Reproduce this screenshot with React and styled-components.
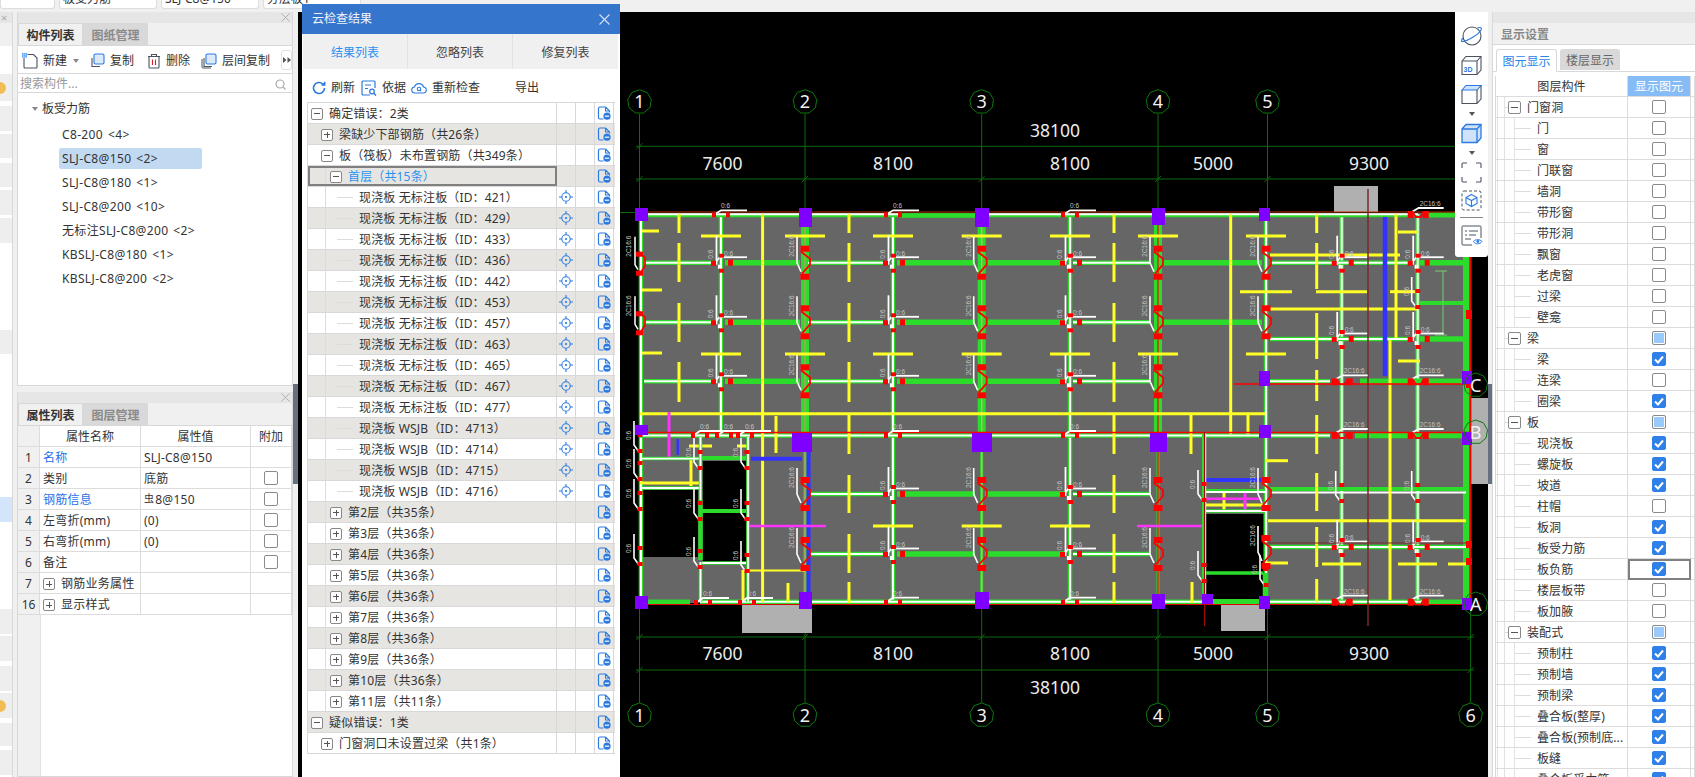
import React from 'react';
import styled, { createGlobalStyle } from 'styled-components';

const GlobalStyle = createGlobalStyle`
  html, body { margin: 0; height: 100%; overflow: hidden; background: #f0f0f0; }
  #root { height: 777px; }
  * { box-sizing: border-box; }
`;

const FONT = `"Noto Sans", "Noto Sans CJK SC", sans-serif`;
const LINE = '#d8d8d8';

const Page = styled.div`
  position: relative; width: 1695px; height: 777px; overflow: hidden;
  font: 12px/16px ${FONT}; color: #333; background: #f0f0f0;
  display: flex; flex-direction: column;
`;
const TopStrip = styled.div`height: 12px; display: flex; gap: 4px; align-items: flex-start;`;
const TopCell = styled.div`
  width: ${p => p.$w}px; height: 9px; background: #fff; border: 1px solid #ddd; border-top: 0;
  border-radius: 0 0 3px 3px; overflow: hidden; padding-left: 3px;
  span { display: block; margin-top: -9px; white-space: nowrap; }
`;
const Main = styled.div`flex: 1; display: flex; min-height: 0;`;

/* left sliver */
const Sliver = styled.div`width: 13px; border-right: 1px solid ${LINE}; background: #fff; display: flex; flex-direction: column; overflow: hidden;`;
const SliverHead = styled.div`height: 11px; background: #e6e6e6; color: #aaa; font-size: 11px; line-height: 11px; padding-left: 1px;`;
const SliverTabs = styled.div`height: 23px; background: #f0f0f0;`;
const Band = styled.div`
  flex: none; height: ${p => p.$h}px; margin-top: ${p => p.$mt}px; background: ${p => p.$c || '#eeeeee'};
  display: flex; align-items: center;
`;
const Dot = styled.i`width: 12px; height: 12px; border-radius: 50%; background: #f2bd55; margin-left: -6px;`;

const Gap = styled.div`width: ${p => p.$w}px; flex: none;`;
const Column = styled.div`width: 276px; flex: none; display: flex; flex-direction: column; gap: 6px;`;
const Panel = styled.div`
  height: ${p => p.$h}px; flex: ${p => p.$h ? 'none' : 1}; min-height: 0; display: flex; flex-direction: column;
  background: #fff; border: 1px solid ${LINE}; border-width: 0 1px 1px 1px; overflow: hidden;
`;
const PanelBar = styled.div`
  height: 11px; flex: none; background: #e6e6e6; color: #a8a8a8; font-size: 12px; line-height: 11px;
  text-align: right; padding-right: 2px;
`;
const TabRow = styled.div`height: 23px; flex: none; background: #f0f0f0; display: flex; border-bottom: 1px solid ${LINE};`;
const Tab = styled.div`
  width: 65px; text-align: center; line-height: 24px; font-weight: 700;
  color: ${p => p.$on ? '#333' : '#8a8a8a'}; background: ${p => p.$on ? '#f0f0f0' : '#d9d9d9'};
  border: 1px solid ${LINE}; border-bottom: 0;
`;
const ToolRow = styled.div`height: 28px; flex: none; display: flex; align-items: center; padding: 3px 0 0 4px; background: #fff; border-bottom: 1px solid ${LINE};`;
const ToolItem = styled.div`width: ${p => p.$w}px; flex: none; display: flex; align-items: center; gap: 5px; white-space: nowrap;`;
const Caret = styled.i`
  width: 0; height: 0; border: 3px solid transparent; border-top: 4px solid #888; border-bottom: 0; margin-left: ${p => p.$ml || 0}px; flex: none;
`;
const MoreButton = styled.div`
  width: 12px; height: 20px; margin-top: -3px; background: #fff; border: 1px solid #e2e2e2; border-radius: 3px; display: flex; align-items: center; justify-content: center;
`;
const SearchRow = styled.div`height: 19px; flex: none; display: flex; align-items: center; justify-content: space-between; padding: 2px 6px 0 2px; color: #999; border-bottom: 1px solid ${LINE}; background: #fff;`;
const Tree = styled.div`flex: 1; background: #fff; padding: 4px 0 0 13px;`;
const TreeRoot = styled.div`height: 24px; display: flex; align-items: center; gap: 4px; padding-left: 1px;`;
const TreeLeaf = styled.div`
  width: 143px; height: 21px; margin: 3px 0 0 28px; padding-left: 3px; line-height: 21px; border-radius: 2px; white-space: nowrap; letter-spacing: .35px; word-spacing: 1.5px;
  background: ${p => p.$on ? '#c2d9f2' : 'transparent'};
`;

/* property table */
const PropBody = styled.div`flex: 1; background: linear-gradient(to right, #f0f0f0 22px, #e2e2e2 22px, #e2e2e2 23px, #fff 23px);`;
const PropGrid = styled.div`display: grid; grid-template-columns: 22px 101px 110px 41px; grid-auto-rows: 21px;`;
const PropCell = styled.div`
  border-right: 1px solid #dcdcdc; border-bottom: 1px solid #dcdcdc; display: flex; align-items: center; white-space: nowrap; overflow: hidden;
  padding-left: ${p => p.$num || p.$center ? 0 : 3}px; padding-top: ${p => p.$box ? 0 : 2}px; justify-content: ${p => p.$num || p.$center ? 'center' : 'flex-start'};
  background: ${p => p.$num ? '#f0f0f0' : '#fff'};
  color: ${p => p.$link ? '#2a6fe8' : '#333'}; letter-spacing: ${p => p.$num || p.$center ? 0 : '.25px'};
`;
const Rebar = styled.span`font-size: 10px; position: relative; top: -2px; margin-right: 1px;`;

const Box = styled.i`
  position: relative; width: ${p => p.$s || 12}px; height: ${p => p.$s || 12}px; flex: none; border: 1px solid #888; border-radius: 2px; background: #fff; margin-right: 6px;
  &::before { content: ''; position: absolute; left: 2px; right: 2px; top: 50%; height: 1px; margin-top: -.5px; background: #555; }
  &::after { content: ''; display: ${p => p.$plus ? 'block' : 'none'}; position: absolute; top: 2px; bottom: 2px; left: 50%; width: 1px; margin-left: -.5px; background: #555; }
`;
const Check = styled.span`
  width: 14px; height: 14px; flex: none; border-radius: 2px; display: flex; align-items: center; justify-content: center;
  border: 1px solid ${p => p.$state === 'on' ? '#2f80e8' : '#8a8a8a'};
  background: ${p => p.$state === 'on' ? '#2f80e8' : '#fff'};
  ${p => p.$state === 'partial' ? 'box-shadow: inset 0 0 0 1px #fff; background: #99c9ff;' : ''}
`;

/* cloud check window */
const Modal = styled.div`
  position: absolute; left: 302px; top: 4px; width: 318px; height: 773px; background: #fff; display: flex; flex-direction: column;
`;
const ModalHead = styled.div`
  height: 30px; flex: none; background: #3575cc; color: #f0f4fa; display: flex; justify-content: space-between; align-items: center; padding: 0 10px 0 10px;
`;
const ModalTabs = styled.div`height: 35px; flex: none; margin: 0 2px 0 1px; background: #f0f0f0; display: grid; grid-template-columns: 105px 105px 1fr;`;
const ModalTab = styled.div`
  display: flex; align-items: center; justify-content: center; padding-top: 3px; color: ${p => p.$on ? '#2a93f0' : '#444'};
  border-right: 1px solid #e2e2e2; &:last-child { border-right: 0; }
`;
const ModalTools = styled.div`height: 33px; flex: none; display: flex; align-items: center; padding: 4px 0 0 10px;`;
const ResultTable = styled.div`margin-left: 5px; width: 308px; border-top: 1px solid #d8d8d8; border-left: 1px solid #d8d8d8;`;
const ResultRow = styled.div`
  height: 21px; display: grid; grid-template-columns: 249px 19px 19px 19px; background: ${p => p.$alt ? '#e6e5e1' : '#fff'};
  border-bottom: 1px solid #d8d8d8;
`;
const ResultMain = styled.div`
  position: relative; display: flex; align-items: center; padding-left: ${p => p.$pad}px; padding-top: 1px; white-space: nowrap; letter-spacing: .15px;
  color: ${p => p.$blue ? '#2a93f0' : '#333'};
  border-right: 1px solid #d8d8d8;
  ${p => p.$sel ? 'outline: 2px solid #808080; outline-offset: -2px;' : ''}
  ${p => p.$guide ? `background: linear-gradient(#dcdcdc,#dcdcdc) 17px 0/1px 100% no-repeat;` : ''}
`;
const Stem = styled.i`width: ${p => p.$w}px; height: 1px; background: #dcdcdc; margin: 0 ${p => p.$mr}px 0 ${p => p.$ml}px; flex: none;`;
const ResultIcon = styled.div`display: flex; align-items: center; justify-content: center; border-right: 1px solid #d8d8d8;`;

/* float toolbar */
const FloatBar = styled.div`
  position: absolute; left: 1455px; top: 12px; width: 33px; height: 245px; background: #fff; border-radius: 0 0 3px 3px;
  display: flex; flex-direction: column; align-items: center; padding-top: 13px;
`;
const FloatSlot = styled.div`height: ${p => p.$h}px; flex: none; display: flex; align-items: center; justify-content: center;`;
const FloatRule = styled.div`width: 23px; height: 1px; background: #888; flex: none; margin: 0 0 6px;`;

/* canvas */
const Canvas = styled.div`width: 1190px; height: 765px; flex: none; background: #000; overflow: hidden; svg { display: block; }`;
const Splitter = styled.div`width: ${p => p.$w}px; flex: none; padding-top: 372px;`;
const Handle = styled.div`height: 100px; background: #667080;`;

/* right panel */
const RightPanel = styled.div`flex: 1; min-width: 0; background: #fff; border-left: 1px solid ${LINE}; display: flex; flex-direction: column; overflow: hidden;`;
const RightTitle = styled.div`height: 22px; flex: none; background: #f0f0f0; color: #888; font-weight: 700; padding-left: 8px; line-height: 23px; border-bottom: 1px solid ${LINE};`;
const RightTabs = styled.div`height: 27px; flex: none; display: flex; gap: 3px; padding: 4px 0 0 3px; background: #fff; border-bottom: 1px solid ${LINE};`;
const RightTab = styled.div`
  width: ${p => p.$on ? 61 : 60}px; height: ${p => p.$on ? 23 : 21}px; text-align: center; line-height: 23px; border-radius: 3px 3px 0 0;
  color: ${p => p.$on ? '#2a84e8' : '#666'}; background: ${p => p.$on ? '#fff' : '#d9d9d9'};
  border: ${p => p.$on ? `1px solid ${LINE}` : 0}; ${p => p.$on ? 'border-bottom-color: #fff;' : ''}
`;
const RightGrid = styled.div`margin: 4px 0 0 2px; display: grid; grid-template-columns: 132px 63px 1fr; grid-auto-rows: 21px; border-left: 1px solid ${LINE};`;
const RCell = styled.div`
  display: flex; align-items: center; border-bottom: 1px solid #dcdcdc; border-right: 1px solid #dcdcdc; white-space: nowrap; overflow: hidden;
  letter-spacing: .1px; padding-top: ${p => p.$box ? 0 : 1}px;
  justify-content: ${p => p.$center ? 'center' : 'flex-start'};
  ${p => p.$head ? 'background: #86bcf6; color: #fff;' : ''}
  ${p => p.$sel ? 'outline: 2px solid #808080; outline-offset: -2px;' : ''}
  ${p => p.$guides ? `background: linear-gradient(#e2e2e2,#e2e2e2) 1px 0/1px 100% no-repeat, linear-gradient(#e2e2e2,#e2e2e2) 8px 0/1px 100% no-repeat${p.$guides > 1 ? ', linear-gradient(#e2e2e2,#e2e2e2) 18px 0/1px 100% no-repeat' : ''};` : ''}
`;

/* icons */
const B = '#2a7ae2';
const Dk = '#4a5260';
const Doc = () => (
  <svg width="14" height="14" viewBox="0 0 14 14">
    <path d="M8.5 1H3A1.5 1.5 0 0 0 1.5 2.5V11.5A1.5 1.5 0 0 0 3 13H6.5" fill="none" stroke={B} strokeWidth="1.2" />
    <path d="M8.5 1 12.5 5V6.5M8.5 1V5H12.5" fill="none" stroke={B} strokeWidth="1.1" />
    <circle cx="10" cy="10.2" r="3.6" fill={B} />
    <path d="M7.8 10.2h4.4" stroke="#fff" strokeWidth="1.2" />
  </svg>
);
const Target = () => (
  <svg width="14" height="14" viewBox="0 0 14 14" fill="none" stroke={B}>
    <circle cx="7" cy="7" r="4.2" strokeWidth="1.1" />
    <circle cx="7" cy="7" r="1.1" fill={B} stroke="none" />
    <path d="M7 0v2.8M7 11.2V14M0 7h2.8M11.2 7H14" strokeWidth="1.1" />
  </svg>
);
const CheckMark = () => (
  <svg width="10" height="9" viewBox="0 0 10 9"><path d="M1 4.5 4 7.5 9 1.5" fill="none" stroke="#fff" strokeWidth="2" /></svg>
);
const NewIcon = () => (
  <svg width="16" height="16" viewBox="0 0 16 16">
    <path d="M2 5V14A1 1 0 0 0 3 15H14A1 1 0 0 0 15 14V5L11.5 1.5H5.5" fill="none" stroke={Dk} strokeWidth="1.1" />
    <rect x="0" y="0" width="5" height="4.5" fill="#3b8cf0" />
    <path d="M0 1.2h5M0 3h5M1.5 0v4.5M3.3 0v4.5" stroke="#cfe2fa" strokeWidth=".6" />
  </svg>
);
const CopyIcon = ({ triple }) => (
  <svg width="16" height="16" viewBox="0 0 16 16" fill="none">
    {triple && <path d="M1 6V14A1 1 0 0 0 2 15H10" stroke={Dk} />}
    <path d="M3 5V13.5H11" stroke={Dk} strokeWidth="1.1" />
    <rect x="5" y="1" width="10" height="10" rx="1.5" fill="#dbe9fb" stroke={B} strokeWidth="1.1" />
  </svg>
);
const TrashIcon = () => (
  <svg width="14" height="16" viewBox="0 0 14 16" fill="none" stroke={Dk} strokeWidth="1.1">
    <path d="M1 3.5H13M4.5 3.5V1.5H9.5V3.5M2 3.5V14A1 1 0 0 0 3 15H11A1 1 0 0 0 12 14V3.5" />
    <path d="M5.5 6.5V12M8.5 6.5V12" stroke="#e02020" />
  </svg>
);
const MoreIcon = () => (
  <svg width="8" height="6" viewBox="0 0 8 6"><path d="M0 0 3.5 3 0 6ZM4.5 0 8 3 4.500 6Z" fill="#555" /></svg>
);
const SearchIcon = () => (
  <svg width="11" height="11" viewBox="0 0 11 11" fill="none" stroke="#aaa" strokeWidth="1.2"><circle cx="5" cy="5" r="4" /><path d="M8 8l2.5 2.5" /></svg>
);
const Refresh = () => (
  <svg width="14" height="14" viewBox="0 0 14 14" fill="none" stroke={B} strokeWidth="1.6">
    <path d="M12.5 7A5.5 5.5 0 1 1 10.8 3" /><path d="M12.8 .8V4H9.5" strokeWidth="1.3" fill={B} />
  </svg>
);
const Basis = () => (
  <svg width="16" height="16" viewBox="0 0 16 16" fill="none" stroke={B} strokeWidth="1.2">
    <path d="M9 15H2A1 1 0 0 1 1 14V2A1 1 0 0 1 2 1H13A1 1 0 0 1 14 2V8" />
    <path d="M4 5H10M4 8.5H7" />
    <circle cx="11" cy="11.5" r="2.3" /><path d="M12.8 13.3 15 15.5" strokeWidth="1.5" />
  </svg>
);
const Cloud = () => (
  <svg width="16" height="12" viewBox="0 0 16 12" fill="none" stroke={B} strokeWidth="1.1">
    <path d="M4 11A3 3 0 0 1 3.5 5 4.7 4.7 0 0 1 12.5 5 3 3 0 0 1 12 11Z" />
    <circle cx="8" cy="7" r="1.7" /><path d="M9.2 8.2 10.2 9.2" />
  </svg>
);
const Close = ({ size = 11, color = '#d7e3f4' }) => (
  <svg width={size} height={size} viewBox="0 0 11 11"><path d="M.5.5l10 10M10.5.5l-10 10" stroke={color} strokeWidth="1.1" /></svg>
);
const Dn = () => (<svg width="8" height="5" viewBox="0 0 8 5"><path d="M1 0h6L4 4z" fill="#555" /></svg>);

const Planet = () => (
  <svg width="24" height="22" viewBox="0 0 24 22" fill="none">
    <circle cx="12" cy="11" r="9" stroke={Dk} strokeWidth="1.1" />
    <path d="M3 13C1 15 1 17 3 16.5 8 16 19 9 21 5 22.5 2.5 20 2 17.5 3" stroke={B} strokeWidth="1.1" />
  </svg>
);
const Cube3D = () => (
  <svg width="21" height="21" viewBox="0 0 21 21" fill="none" stroke={Dk} strokeWidth="1.1">
    <path d="M1 6 5 1.5H20V15L16 19.5H1Z" /><path d="M1 6H16V19.5M16 6 20 1.5" />
    <text x="2.5" y="17" fontFamily="Liberation Sans, sans-serif" fontSize="7" fontWeight="700" fill={B} stroke="none">3D</text>
  </svg>
);
const CubeTop = () => (
  <svg width="21" height="21" viewBox="0 0 21 21" fill="none" stroke={Dk} strokeWidth="1.1">
    <path d="M1 6 5 1.5H20L16 6Z" fill="#cfe2fa" stroke={B} /><path d="M1 6V19.5H16V6M20 1.5V15L16 19.5" />
  </svg>
);
const CubeFill = () => (
  <svg width="21" height="21" viewBox="0 0 21 21" fill="#cfe2fa" stroke={B} strokeWidth="1.3">
    <path d="M1 6 5 1.5H20V15L16 19.5H1Z" /><path d="M1 6H16V19.5M16 6 20 1.5" fill="none" />
  </svg>
);
const FrameIcon = () => (
  <svg width="21" height="21" viewBox="0 0 21 21" fill="none" stroke={Dk} strokeWidth="1.1">
    <path d="M1 6V2A1 1 0 0 1 2 1H6M15 1H19A1 1 0 0 1 20 2V6M20 15V19A1 1 0 0 1 19 20H15M6 20H2A1 1 0 0 1 1 19V15" />
  </svg>
);
const DashCube = () => (
  <svg width="21" height="21" viewBox="0 0 21 21" fill="none">
    <rect x="1" y="1" width="19" height="19" rx="2" stroke={Dk} strokeDasharray="3 2" />
    <path d="M10.5 4.5 16 7.5V13.5L10.5 16.5 5 13.5V7.5ZM5 7.5 10.5 10.5 16 7.5M10.5 10.5V16.5" stroke={B} strokeWidth="1.1" />
  </svg>
);
const ListEye = () => (
  <svg width="22" height="21" viewBox="0 0 22 21" fill="none" stroke={Dk}>
    <path d="M11 20H2A1 1 0 0 1 1 19V2A1 1 0 0 1 2 1H19A1 1 0 0 1 20 2V13" />
    <path d="M4 6h2M8 6h9M4 10h2M8 10h7M4 14h6" />
    <path d="M12.5 16.5C14 14 19 14 21 16.5 19 19.5 14 19.5 12.5 16.5Z" stroke={B} /><circle cx="16.8" cy="16.5" r="1.4" fill={B} stroke="none" />
  </svg>
);

/* ---------- CAD drawing ---------- */
const G = '#2bdc2b', Y = '#ffff26', W = '#ffffff', R = '#ff0000', P = '#8000ff', M = '#ff33ff', BL = '#3333ff', DG = '#0c6a0c', GR = '#b0b0b0';
const YW = 3;
const AX = [639.5, 805, 981.7, 1158, 1267.5, 1470.6];
const lines = [], rects = [], labels = [], polys = [];
const ln = (x1, y1, x2, y2, c, w = 1) => lines.push([x1, y1, x2, y2, c, w]);
const rc = (x, y, w, h, c) => rects.push([x, y, w, h, c]);
const hs = (y, segs, c, w) => segs.forEach(([a, b]) => ln(a, y, b, y, c, w));
const vs = (x, segs, c, w) => segs.forEach(([a, b]) => ln(x, a, x, b, c, w));
const tx = (x, y, t, rot, size = 6.5) => labels.push([x, y, t, rot, size]);

const J = (cx, cy) => {
  ln(cx - 1, cy - 6, cx - 5, cy - 1, W, 1.8);
  ln(cx - 4.5, cy - 27, cx - 4.5, cy + 2, W, 1.8);
  ln(cx - 2, cy + 2, cx - 2, cy + 6, W, 2.2);
  ln(cx - 1, cy - 5.5, cx + 26, cy - 5.5, W, 1.8);
  rc(cx - 10, cy - 2, 5, 5, R); rc(cx - 2, cy - 9, 5, 4, R); rc(cx - 2, cy + 6, 5, 4, R); rc(cx + 7, cy - 3, 5, 6, R);
  tx(cx + 3, cy - 7, '0:6'); tx(cx - 8, cy - 4, '0:6', -90);
};
const Z = (cx, cy) => {
  rc(cx - 4.5, cy - 17, 9, 6, R); rc(cx - 4.5, cy + 11, 9, 6, R);
  polys.push([`${cx - 4},${cy - 11} ${cx + 5},${cy - 4} ${cx + 5},${cy + 2} ${cx - 3},${cy + 11}`, R, 1.8]);
  for (const dy of [-15, -13, 13, 15]) ln(cx - 5, cy + dy, cx + 5, cy + dy, '#ff7070', .5);
  polys.push([`${cx - 8},${cy - 26} ${cx - 8},${cy} ${cx - 4},${cy + 9}`, W, 1.6]);
  tx(cx - 11, cy - 6, '2C16:6', -90, 6.5);
};
const H = (cx, y) => {
  polys.push([`${cx - 6},${y} ${cx},${y - 4} ${cx + 26},${y - 4}`, W, 1.8]);
  rc(cx - 9, y - 2, 4, 5, R); rc(cx + 5, y - 2, 4, 5, R);
  tx(cx + 0, y - 6, '0:6');
};
const V = (cx, y) => {
  polys.push([`${cx - 6},${y - 21} ${cx - 6},${y + 3} ${cx - 1},${y + 10}`, W, 1.6]);
  rc(cx - 2.5, y - 9, 5, 4, R); rc(cx - 2.5, y + 7, 5, 4, R);
  tx(cx - 9, y - 2, '0:6', -90);
};
const Wm = (cx, y) => {
  rc(cx - 10, y - 3, 6, 7, R); rc(cx + 5, y - 3, 6, 7, R);
  polys.push([`${cx - 5},${y - 2} ${cx - 2},${y + 3} ${cx + 3},${y + 3} ${cx + 6},${y - 2}`, R, 1.8]);
  polys.push([`${cx - 6},${y - 2} ${cx + 1},${y - 6} ${cx + 26},${y - 6}`, W, 1.8]);
  tx(cx + 2, y - 8, '2C16:6', 0, 6.5);
};

// beams: verticals
vs(805, [[214, 435]], G, 8); vs(805, [[435, 602]], G, 3); vs(805, [[214, 602]], '#ff7a7a', 1);
vs(981.7, [[214, 435]], G, 8); vs(981.7, [[435, 602]], G, 3); vs(981.7, [[214, 602]], '#ff9a7a', 1.2);
vs(1158, [[214, 435]], G, 8); vs(1158, [[435, 602]], G, 3); vs(1158, [[214, 602]], R, 1.2);
[[641, 214, 602], [721, 214, 435], [893, 214, 602], [1070, 214, 602], [1266, 214, 602], [1341.7, 214, 602], [1417.7, 214, 602]].forEach(([x, a, b]) => {
  vs(x, [[a, b]], G, 4.5);
  vs(x, [[a, b]], W, 2);
});
vs(1466, [[214, 602]], G, 6); vs(1470.5, [[214, 602]], R, 1.8);
// beams: horizontals
const whiteOnGreen = (y, segs) => { hs(y, segs, G, 4.5); hs(y, segs, W, 2); };
[262.7, 322.3].forEach(y => {
  hs(y, [[725, 800], [897, 975], [985, 1065], [1162, 1262]], G, 5.5);
  whiteOnGreen(y, [[644, 713], [808, 883], [1073, 1150]]);
});
whiteOnGreen(262.7, [[1270, 1410]]); hs(262.7, [[1420, 1466]], G, 5.5);
whiteOnGreen(339, [[1270, 1410]]); hs(339, [[1420, 1466]], G, 5.5);
hs(303, [[1420, 1466]], G, 4);
hs(271, [[1435, 1447]], '#70d070', 1); hs(335, [[1435, 1447]], '#70d070', 1); vs(1443, [[271, 335]], '#70d070', 1);
hs(381.3, [[725, 800], [897, 975], [985, 1065], [1360, 1466]], G, 5.5);
whiteOnGreen(381.3, [[644, 713], [808, 883], [1073, 1150], [1270, 1330]]);
whiteOnGreen(435.5, [[640, 1262], [1270, 1330]]); hs(435.5, [[1355, 1466]], G, 5.5);
[494, 554].forEach(y => {
  hs(y, [[897, 975], [985, 1065]], G, 5.5);
  whiteOnGreen(y, [[808, 883], [1073, 1150]]);
});
hs(489, [[1270, 1466]], G, 4); hs(492.5, [[1270, 1466]], W, 1.8);
whiteOnGreen(547, [[1270, 1466]]);
hs(601.7, [[640, 690], [1428, 1466]], G, 4.5);
whiteOnGreen(601.7, [[700, 1262], [1270, 1425]]);
hs(215.5, [[640, 1418]], G, 3.5); hs(215.5, [[900, 975]], G, 4.5); hs(214.3, [[640, 900], [975, 1418]], W, 2); hs(215, [[1428, 1466]], G, 5);

// yellow
[236, 354].forEach(y => [721, 805, 893, 981.7, 1070, 1158].forEach(x => hs(y, [[x - 20, x + 20]], Y, YW)));
[526].forEach(y => [893, 981.7, 1070].forEach(x => hs(y, [[x - 20, x + 20]], Y, YW)));
hs(236, [[1246, 1286]], Y, YW); hs(354, [[1246, 1286]], Y, YW);
const yy = [[214, 233], [243, 282], [303, 342], [362, 402], [415, 454], [475, 513], [534, 573], [582, 603]];
[849, 1114].forEach(x => vs(x, yy, Y, YW));
vs(679, yy.slice(0, 4), Y, YW);
vs(1316.7, [[214, 233], [243, 289], [313, 359], [370, 401], [415, 454], [473, 511], [527, 567], [579, 602]], Y, YW);
vs(762.6, [[214, 602]], Y, YW); vs(1230.7, [[214, 434]], Y, YW); vs(1396, [[214, 338]], Y, YW); vs(1390, [[340, 600]], Y, YW);
hs(413.7, [[640, 1265]], Y, YW);
hs(255, [[1270, 1400]], Y, YW); hs(309, [[1268, 1418]], Y, YW);
hs(291.7, [[1240, 1292], [1316, 1367], [1390, 1417]], Y, YW);
hs(232, [[1398, 1418]], Y, YW); hs(361, [[1398, 1420]], Y, YW);
hs(520.7, [[1268, 1466]], Y, YW); hs(564, [[1322, 1361], [1398, 1437], [1448, 1466]], Y, YW);
hs(460.7, [[1265, 1288]], Y, YW); hs(563, [[1265, 1288]], Y, YW);
hs(231, [[642, 659]], Y, YW); hs(290, [[642, 662]], Y, YW); hs(353, [[642, 662]], Y, YW);
hs(483, [[640, 700]], Y, 3);
vs(776, [[416, 453]], Y, YW); vs(691, [[460, 486]], Y, YW); vs(743, [[570, 600]], Y, YW); vs(788, [[583, 602]], Y, YW);
hs(446, [[689, 712], [737, 749]], Y, YW);
hs(570.5, [[750, 805]], Y, 2);
vs(1191, [[415, 454]], Y, YW); vs(1248, [[415, 434]], Y, YW); vs(1192, [[582, 603]], Y, YW); vs(1224, [[491, 512]], Y, YW);
hs(505, [[1206, 1264]], Y, YW);

// blue
vs(1385, [[217, 376]], BL, 4.5); vs(808.6, [[452, 592]], BL, 4); hs(458.7, [[751, 802]], BL, 4); vs(677.7, [[439, 455]], BL, 2.5); hs(480, [[1206, 1262]], BL, 4);
// magenta
vs(669, [[412, 459]], M, 3); hs(526, [[748, 826], [1137, 1204]], M, 2.5); hs(498.7, [[1204, 1262]], M, 2.5); vs(1245, [[491, 513]], M, 3);

// left bay whites
hs(458.6, [[642, 700]], G, 3.5); hs(458.6, [[642, 700]], W, 1.8);
hs(488, [[642, 700]], G, 3.5); hs(488, [[642, 700]], W, 1.8);
hs(458, [[702, 746]], G, 4); hs(511, [[702, 746]], G, 4); hs(563, [[702, 746]], G, 3.5); hs(563, [[702, 746]], W, 1.8);
vs(700.5, [[437, 500]], G, 3.5); vs(700.5, [[437, 500]], W, 1.8); vs(700.5, [[500, 560]], G, 4.5); vs(700.5, [[562, 602]], G, 3.5); vs(700.5, [[562, 602]], W, 1.8);
vs(748, [[437, 602]], G, 3.5); vs(748, [[437, 602]], W, 1.8);
// 5000 bay
vs(1204, [[433, 602]], G, 4); vs(1205.5, [[433, 602]], W, 1.4);
hs(491, [[1206, 1265]], G, 4); hs(492, [[1206, 1265]], W, 1.8); hs(511, [[1206, 1265]], G, 3.5); hs(511, [[1206, 1265]], W, 1.8);
hs(573, [[1206, 1263]], G, 3.5); hs(601, [[1206, 1262]], G, 4); vs(1265, [[573, 602]], G, 4.5);

// marks
[262.7, 322.3, 381.3].forEach(y => { [721, 893, 1070].forEach(x => J(x, y)); [805, 981.7, 1158].forEach(x => Z(x, y)); });
[494, 554].forEach(y => { [893, 1070].forEach(x => J(x, y)); [805, 981.7, 1158].forEach(x => Z(x, y)); });
[262.7, 322.3].forEach(y => {
  polys.push([`639,${y - 11} 645,${y - 5} 645,${y + 3} 640,${y + 11}`, R, 1.8]); rc(636, y - 11, 7, 5, R); rc(636, y + 8, 7, 5, R);
  polys.push([`635,${y - 26} 635,${y + 2} 638,${y + 7}`, W, 1.5]); tx(631, y - 6, '2C16:6', -90, 6.5);
  Z(1266, y);
});
[262.7, 339].forEach(y => [1341.7, 1417.7].forEach(x => J(x, y)));
[547].forEach(y => [1341.7, 1417.7].forEach(x => J(x, y)));
[492].forEach(y => [1341.7, 1417.7].forEach(x => V(x, y)));
V(1417.7, 298);
[214.3].forEach(y => [721, 893, 1070].forEach(x => H(x, y)));
[601.7].forEach(y => [893, 1070].forEach(x => H(x, y)));
[435].forEach(y => [700, 724, 745, 893, 1070].forEach(x => H(x, y)));
H(703, 602); H(747, 602);
V(640, 442); V(640, 470); V(640, 500); V(640, 555);
V(700, 459); V(700, 510); V(700, 558); V(747, 459); V(747, 510); V(747, 562);
V(1204, 491); V(1204, 572);
Z(1266, 494); Z(1266, 552);
V(1266, 576);
[381.3, 435, 601.7].forEach(y => [1341.7, 1417.7].forEach(x => Wm(x, y)));
Wm(1417.7, 214);
[310, 312, 381, 541, 558].forEach(y => { rc(1466, y, 6, 7, R); });
// red lines
hs(212, [[640, 1470]], '#c03000', 1.2); hs(432.5, [[640, 1470]], R, 1.4); hs(384, [[1234, 1470]], R, 1.4); hs(604.5, [[640, 1470]], '#e00000', 1.2);
vs(1204.6, [[432, 626]], '#a00808', 1.2); hs(543, [[1266, 1470]], '#7a2a2a', 1);
vs(1368, [[189, 626]], '#7a2a2a', 1.5);

// purple
[[635, 208, 13, 13], [799, 208, 13, 19], [975, 208, 14, 19], [1152, 208, 13, 17], [1259, 208, 11, 13],
 [635, 425, 13, 10], [792, 433, 20, 19], [972, 433, 20, 19], [1150, 433, 17, 19], [1259, 425, 12, 13],
 [1259, 371, 11, 15], [1462, 371, 10, 13], [1462, 432, 10, 13], [1462, 598, 10, 12],
 [635, 596, 13, 13], [799, 592, 13, 17], [975, 592, 14, 17], [1152, 594, 13, 15], [1202, 594, 11, 10], [1259, 596, 11, 13]
].forEach(r => rects.push([r[0], r[1], r[2], r[3], P]));

const bubble = (cx, cy) => {
  const pts = [];
  for (let i = 0; i < 9; i++) {
    const a = -Math.PI / 2 + i * 2 * Math.PI / 9;
    pts.push(`${(cx + 12 * Math.cos(a)).toFixed(1)},${(cy + 12 * Math.sin(a)).toFixed(1)}`);
  }
  return pts.join(' ');
};
const bubbles = [
  ['1', AX[0], 101.7], ['2', AX[1], 101.7], ['3', AX[2], 101.7], ['4', AX[3], 101.7], ['5', AX[4], 101.7],
  ['1', AX[0], 715], ['2', AX[1], 715], ['3', AX[2], 715], ['4', AX[3], 715], ['5', AX[4], 715], ['6', AX[5], 715],
  ['C', 1475.7, 385], ['B', 1475.7, 432], ['A', 1475.7, 604]
];
const dims = [
  ['38100', 1055, 130.6], ['7600', 722.6, 163], ['8100', 893, 163], ['8100', 1070, 163], ['5000', 1213, 163], ['9300', 1369, 163],
  ['7600', 722.6, 653.7], ['8100', 893, 653.7], ['8100', 1070, 653.7], ['5000', 1213, 653.7], ['9300', 1369, 653.7], ['38100', 1055, 687]
];
const ticks = [];
AX.slice(0, 5).forEach(x => { ticks.push([x, 179]); ticks.push([x, 637]); });
ticks.push([AX[5], 637], [AX[0], 146.3], [AX[0], 670], [AX[5], 670]);

const Drawing = () => (
  <svg width="1190" height="765" viewBox="298 12 1190 765">
    {AX.map((x, i) => <g key={i} stroke={DG}>
      {i < 5 && <line x1={x} y1="114" x2={x} y2="214" />}
      <line x1={x} y1="602" x2={x} y2="703" />
    </g>)}
    <g stroke={DG}>
      <line x1="620" y1="212.5" x2="640" y2="212.5" />
      {[146.3, 179].map(y => <line key={y} x1="636" y1={y} x2="1456" y2={y} />)}
      {[637, 670].map(y => <line key={y} x1="636" y1={y} x2="1474" y2={y} />)}
      {ticks.map(([x, y], i) => <line key={i} x1={x - 3} y1={y + 3} x2={x + 3} y2={y - 3} />)}
    </g>
    <rect x="640" y="213" width="830" height="390" fill="#666666" />
    <rect x="642.7" y="490" width="55.5" height="67" fill="#000" />
    <rect x="702.7" y="461" width="43.3" height="49" fill="#000" />
    <rect x="702.7" y="513" width="43.3" height="49" fill="#000" />
    <rect x="1206" y="514" width="57.5" height="88" fill="#000" />
    <rect x="1334" y="186" width="44" height="26" fill={GR} />
    <rect x="742" y="605" width="70" height="28" fill={GR} />
    <rect x="1221" y="605" width="44" height="26" fill={GR} />
    <rect x="1471" y="398" width="17" height="86" fill={GR} />
    {lines.map(([x1, y1, x2, y2, c, w], i) => <line key={i} x1={x1} y1={y1} x2={x2} y2={y2} stroke={c} strokeWidth={w} />)}
    {polys.map(([p, c, w], i) => <polyline key={i} points={p} fill="none" stroke={c} strokeWidth={w} />)}
    {rects.map(([x, y, w, h, c], i) => <rect key={i} x={x} y={y} width={w} height={h} fill={c} />)}
    <g fill="#c4c4c4" fontFamily="Liberation Sans, sans-serif">
      {labels.map(([x, y, t, rot, s], i) => (
        <text key={i} x={x} y={y} fontSize={s} transform={rot ? `rotate(${rot} ${x} ${y})` : undefined}>{t}</text>
      ))}
    </g>
    {bubbles.map(([t, x, y], i) => (
      <g key={i}>
        <polygon points={bubble(x, y)} fill={'ABC'.includes(t) ? 'none' : '#000'} stroke="#0f780f" strokeWidth="1" />
        <text x={x} y={y + 6.5} textAnchor="middle" fontFamily="Noto Sans, sans-serif" fontSize="18" fill="#f2f2f2">{t}</text>
      </g>
    ))}
    {dims.map(([t, x, y], i) => (
      <text key={i} x={x} y={y + 6.5} textAnchor="middle" fontFamily="Noto Sans, sans-serif" fontSize="17.5" fill="#ececec">{t}</text>
    ))}
  </svg>
);

/* ---------- data ---------- */
const leaves = ['C8-200 <4>', 'SLJ-C8@150 <2>', 'SLJ-C8@180 <1>', 'SLJ-C8@200 <10>', '无标注SLJ-C8@200 <2>', 'KBSLJ-C8@180 <1>', 'KBSLJ-C8@200 <2>'];
const bands = [[27, 28, '#eee', 1], [25, 5], [24, 3], [24, 5], [25, 3], [25, 3], [24, 87], [25, 143, '#d3e5fb'], [25, 87], [25, 2], [25, 5], [25, 2, '#eee', 1], [23, 5], [25, 4]];
const props = [
  [1, '名称', 'SLJ-C8@150', false, true],
  [2, '类别', '底筋', true],
  [3, '钢筋信息', <><Rebar>虫</Rebar>8@150</>, true, true],
  [4, '左弯折(mm)', '(0)', true],
  [5, '右弯折(mm)', '(0)', true],
  [6, '备注', '', true]
];
const ids = [421, 429, 433, 436, 442, 453, 457, 463, 465, 467, 477];
const rows = [
  { lvl: 0, open: true, t: '确定错误：2类' },
  { lvl: 1, t: '梁缺少下部钢筋（共26条）' },
  { lvl: 1, open: true, t: '板（筏板）未布置钢筋（共349条）' },
  { lvl: 2, open: true, t: '首层（共15条）', sel: true },
  ...ids.map(n => ({ lvl: 3, t: `现浇板 无标注板（ID：${n}）` })),
  ...[4713, 4714, 4715, 4716].map(n => ({ lvl: 3, t: `现浇板 WSJB（ID：${n}）` })),
  { lvl: 2, t: '第2层（共35条）' },
  ...[3, 4, 5, 6, 7, 8, 9].map(n => ({ lvl: 2, t: `第${n}层（共36条）` })),
  { lvl: 2, t: '第10层（共36条）' },
  { lvl: 2, t: '第11层（共11条）' },
  { lvl: 0, open: true, t: '疑似错误：1类' },
  { lvl: 1, t: '门窗洞口未设置过梁（共1条）' }
];
const PAD = [3, 13, 22];
const layers = [
  ['门窗洞', 0, 'off'], ['门', 1, 'off'], ['窗', 1, 'off'], ['门联窗', 1, 'off'], ['墙洞', 1, 'off'], ['带形窗', 1, 'off'], ['带形洞', 1, 'off'], ['飘窗', 1, 'off'], ['老虎窗', 1, 'off'], ['过梁', 1, 'off'], ['壁龛', 1, 'off'],
  ['梁', 0, 'partial'], ['梁', 1, 'on'], ['连梁', 1, 'off'], ['圈梁', 1, 'on'],
  ['板', 0, 'partial'], ['现浇板', 1, 'on'], ['螺旋板', 1, 'on'], ['坡道', 1, 'on'], ['柱帽', 1, 'off'], ['板洞', 1, 'on'], ['板受力筋', 1, 'on'], ['板负筋', 1, 'on', true], ['楼层板带', 1, 'off'], ['板加腋', 1, 'off'],
  ['装配式', 0, 'partial'], ['预制柱', 1, 'on'], ['预制墙', 1, 'on'], ['预制梁', 1, 'on'], ['叠合板(整厚)', 1, 'on'], ['叠合板(预制底...', 1, 'on'], ['板缝', 1, 'on'], ['叠合板受力筋', 1, 'on']
];

const CheckBox = ({ state }) => <Check $state={state}>{state === 'on' && <CheckMark />}</Check>;

export default function App() {
  return (
    <Page>
      <GlobalStyle />
      <TopStrip>
        <TopCell $w={55}><span /></TopCell>
        <TopCell $w={98}><span>板受力筋</span></TopCell>
        <TopCell $w={98}><span>SLJ-C8@150</span></TopCell>
        <TopCell $w={98}><span>分层板1</span></TopCell>
      </TopStrip>
      <Main>
        <Sliver>
          <SliverHead>×</SliverHead>
          <SliverTabs />
          {bands.map(([h, mt, c, dot], i) => <Band key={i} $h={h} $mt={mt} $c={c}>{dot && <Dot />}</Band>)}
        </Sliver>
        <Gap $w={4} />
        <Column>
          <Panel $h={374}>
            <PanelBar><Close size={9} color="#aaa" /></PanelBar>
            <TabRow><Tab $on>构件列表</Tab><Tab>图纸管理</Tab></TabRow>
            <ToolRow>
              <ToolItem $w={67}><NewIcon />新建<Caret $ml={1} /></ToolItem>
              <ToolItem $w={58}><CopyIcon />复制</ToolItem>
              <ToolItem $w={54}><TrashIcon />删除</ToolItem>
              <ToolItem $w={80}><CopyIcon triple />层间复制</ToolItem>
              <MoreButton><MoreIcon /></MoreButton>
            </ToolRow>
            <SearchRow>搜索构件...<SearchIcon /></SearchRow>
            <Tree>
              <TreeRoot><Caret $ml={0} />板受力筋</TreeRoot>
              {leaves.map((l, i) => <TreeLeaf key={i} $on={i === 1}>{l}</TreeLeaf>)}
            </Tree>
          </Panel>
          <Panel>
            <PanelBar><Close size={9} color="#aaa" /></PanelBar>
            <TabRow><Tab $on>属性列表</Tab><Tab>图层管理</Tab></TabRow>
            <PropBody>
              <PropGrid>
                <PropCell $num />
                <PropCell $center>属性名称</PropCell>
                <PropCell $center>属性值</PropCell>
                <PropCell $center>附加</PropCell>
                {props.map(([n, k, v, box, link]) => (
                  <React.Fragment key={n}>
                    <PropCell $num>{n}</PropCell>
                    <PropCell $link={link}>{k}</PropCell>
                    <PropCell>{v}</PropCell>
                    <PropCell $center $box>{box && <CheckBox state="off" />}</PropCell>
                  </React.Fragment>
                ))}
                {[[7, '钢筋业务属性'], [16, '显示样式']].map(([n, k]) => (
                  <React.Fragment key={n}>
                    <PropCell $num>{n}</PropCell>
                    <PropCell><Box $plus />{k}</PropCell>
                    <PropCell />
                    <PropCell />
                  </React.Fragment>
                ))}
              </PropGrid>
            </PropBody>
          </Panel>
        </Column>
        <Splitter $w={5}><Handle /></Splitter>
        <Canvas><Drawing /></Canvas>
        <Splitter $w={4}><Handle /></Splitter>
        <RightPanel>
          <PanelBar />
          <RightTitle>显示设置</RightTitle>
          <RightTabs><RightTab $on>图元显示</RightTab><RightTab>楼层显示</RightTab></RightTabs>
          <RightGrid>
            <RCell $center>图层构件</RCell>
            <RCell $center $head>显示图元</RCell>
            <RCell />
            {layers.map(([t, lvl, st, sel], i) => (
              <React.Fragment key={i}>
                <RCell $guides={lvl ? 2 : 1}>
                  {lvl ? <><Stem $w={16} $ml={19} $mr={6} />{t}</> : <><Stem $w={3} $ml={9} $mr={0} /><Box $s={13} />{t}</>}
                </RCell>
                <RCell $center $box $sel={sel}><CheckBox state={st} /></RCell>
                <RCell />
              </React.Fragment>
            ))}
          </RightGrid>
        </RightPanel>
      </Main>

      <Modal>
        <ModalHead>云检查结果<Close /></ModalHead>
        <ModalTabs>
          <ModalTab $on>结果列表</ModalTab><ModalTab>忽略列表</ModalTab><ModalTab>修复列表</ModalTab>
        </ModalTabs>
        <ModalTools>
          <ToolItem $w={49}><Refresh />刷新</ToolItem>
          <ToolItem $w={50}><Basis />依据</ToolItem>
          <ToolItem $w={104}><Cloud />重新检查</ToolItem>
          <span>导出</span>
        </ModalTools>
        <ResultTable>
          {rows.map((r, i) => (
            <ResultRow key={i} $alt={i % 2 === 1}>
              {r.lvl === 3 ? (
                <ResultMain $pad={0} $guide>
                  <Stem $w={16} $ml={29} $mr={6} />{r.t}
                </ResultMain>
              ) : (
                <ResultMain $pad={PAD[r.lvl]} $sel={r.sel} $blue={r.sel} $guide={r.lvl === 2}>
                  <Box $plus={!r.open} />{r.t}
                </ResultMain>
              )}
              <ResultIcon>{r.lvl === 3 && <Target />}</ResultIcon>
              <ResultIcon />
              <ResultIcon><Doc /></ResultIcon>
            </ResultRow>
          ))}
        </ResultTable>
      </Modal>

      <FloatBar>
        <FloatSlot $h={22}><Planet /></FloatSlot>
        <FloatSlot $h={36}><Cube3D /></FloatSlot>
        <FloatSlot $h={22}><CubeTop /></FloatSlot>
        <FloatSlot $h={18}><Dn /></FloatSlot>
        <FloatSlot $h={21}><CubeFill /></FloatSlot>
        <FloatSlot $h={18}><Dn /></FloatSlot>
        <FloatSlot $h={21}><FrameIcon /></FloatSlot>
        <FloatSlot $h={34}><DashCube /></FloatSlot>
        <FloatRule />
        <FloatSlot $h={22}><ListEye /></FloatSlot>
      </FloatBar>
    </Page>
  );
}
